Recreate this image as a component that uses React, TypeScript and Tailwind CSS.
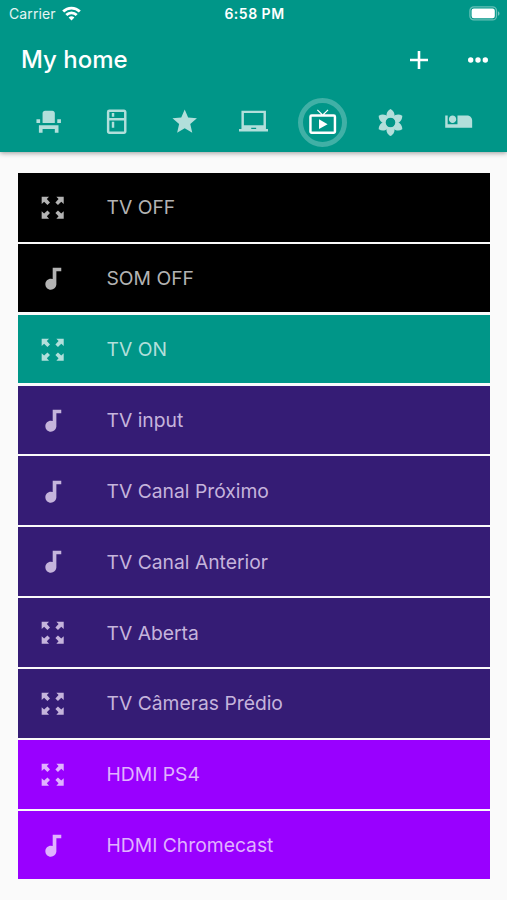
import type { ReactNode } from 'react';
import {
  MdAirlineSeatIndividualSuite,
  MdAudiotrack,
  MdEventSeat,
  MdLaptopChromebook,
  MdLiveTv,
  MdOutlineKitchen,
  MdStar,
} from 'react-icons/md';

const WifiIcon = () => (
  <svg className="ml-[6px] h-[15px] w-[19px]" viewBox="0 0 19 15" fill="none" stroke="currentColor" strokeWidth="2.8">
    <path d="M1.2 5.6a11.8 11.8 0 0 1 16.6 0" />
    <path d="M4.3 9.1a7.4 7.4 0 0 1 10.4 0" />
    <path d="M9.5 14.6l-2.9-3a4.1 4.1 0 0 1 5.8 0z" fill="currentColor" stroke="none" />
  </svg>
);

const BatteryIcon = () => (
  <svg className="h-[15px] w-[31px]" viewBox="0 0 31 15">
    <rect x="0.9" y="0.9" width="26.6" height="13" rx="4" fill="none" stroke="white" strokeOpacity="0.4" strokeWidth="1.3" />
    <rect x="2.6" y="2.6" width="23.2" height="9.6" rx="2.2" fill="white" />
    <path d="M29 5.2v4.6c2-.9 2-3.7 0-4.6z" fill="white" fillOpacity="0.45" />
  </svg>
);

const FlowerIcon = () => (
  <svg className="size-[29px]" viewBox="-14.5 -14.5 29 29" fill="currentColor">
    {[0, 60, 120, 180, 240, 300].map((angle) => (
      <path
        key={angle}
        transform={`rotate(${angle})`}
        d="M-3.6 -5.2C-4.9 -8.4 -3 -12 0 -13.6C3 -12 4.9 -8.4 3.6 -5.2z"
      />
    ))}
    <circle r="6.3" fill="none" stroke="currentColor" strokeWidth="3" />
  </svg>
);

const ExpandIcon = () => (
  <svg className="size-[29.4px]" viewBox="0 0 24 24" fill="currentColor">
    {[0, 90, 180, 270].map((angle) => (
      <path
        key={angle}
        transform={`rotate(${angle} 12 12)`}
        d="M3 3h6L7.2 5l2.6 2.7-2.1 2.1L5 7.2 3 9z"
      />
    ))}
  </svg>
);

const tabs: { name: string; icon: ReactNode }[] = [
  { name: 'living', icon: <MdEventSeat /> },
  { name: 'kitchen', icon: <MdOutlineKitchen /> },
  { name: 'favorites', icon: <MdStar /> },
  { name: 'office', icon: <MdLaptopChromebook /> },
  { name: 'tv', icon: <MdLiveTv /> },
  { name: 'garden', icon: <FlowerIcon /> },
  { name: 'bedroom', icon: <MdAirlineSeatIndividualSuite /> },
];

const rows = [
  { label: 'TV OFF', icon: 'scene', color: 'bg-black text-[#b3b3b3]' },
  { label: 'SOM OFF', icon: 'sound', color: 'bg-black text-[#b3b3b3]' },
  { label: 'TV ON', icon: 'scene', color: 'bg-[#009688] text-[#b2dfdb]' },
  { label: 'TV input', icon: 'sound', color: 'bg-[#351c75] text-[#c5b4dc]' },
  { label: 'TV Canal Próximo', icon: 'sound', color: 'bg-[#351c75] text-[#c5b4dc]' },
  { label: 'TV Canal Anterior', icon: 'sound', color: 'bg-[#351c75] text-[#c5b4dc]' },
  { label: 'TV Aberta', icon: 'scene', color: 'bg-[#351c75] text-[#c5b4dc]' },
  { label: 'TV Câmeras Prédio', icon: 'scene', color: 'bg-[#351c75] text-[#c5b4dc]' },
  { label: 'HDMI PS4', icon: 'scene', color: 'bg-[#9900ff] text-[#e0b2ff]' },
  { label: 'HDMI Chromecast', icon: 'sound', color: 'bg-[#9900ff] text-[#e0b2ff]' },
];

export default function App() {
  return (
    <div className="h-[900px] w-[507px] overflow-hidden bg-[#fafafa] font-['Inter',sans-serif]">
      <header className="h-[152px] bg-[#009688] text-white shadow-[0_1px_5px_rgba(0,0,0,0.4)]">
        <div className="grid h-[27px] grid-cols-3 items-center pr-[7px] pl-[9px] text-[14px]">
          <div className="flex items-center">
            <span className="tracking-[0.1px] text-white/90">Carrier</span>
            <WifiIcon />
          </div>
          <span className="text-center text-[14px] font-semibold tracking-[0.5px]">6:58 PM</span>
          <div className="flex justify-end">
            <BatteryIcon />
          </div>
        </div>

        <div className="flex h-[65px] items-center pl-[21px]">
          <h1 className="flex-1 text-[24px] font-medium">My home</h1>
          <button className="flex w-[59px] justify-center">
            <svg className="size-[18px]" viewBox="0 0 18 18" stroke="currentColor" strokeWidth="2.6">
              <path d="M9 0v18M0 9h18" />
            </svg>
          </button>
          <button className="flex w-[59px] justify-center">
            <svg className="h-[6px] w-[20px]" viewBox="0 0 20 6" fill="currentColor">
              <circle cx="2.7" cy="3" r="2.7" />
              <circle cx="10" cy="3" r="2.7" />
              <circle cx="17.3" cy="3" r="2.7" />
            </svg>
          </button>
        </div>

        <nav className="flex h-[60px] items-center px-[14px]">
          {tabs.map((tab) => (
            <button key={tab.name} className="flex flex-1 justify-center text-[29.4px]">
              {tab.name === 'tv' ? (
                <span className="ml-px flex size-[49px] shrink-0 items-center justify-center rounded-full border-[5px] border-white/25">
                  {tab.icon}
                </span>
              ) : (
                <span className="text-[#b2dfdb]">{tab.icon}</span>
              )}
            </button>
          ))}
        </nav>
      </header>

      <main className="flex flex-col gap-[2.2px] pt-[20.9px] pr-[17px] pl-[18px]">
        {rows.map((row) => (
          <div key={row.label} className={`flex h-[68.7px] items-center pt-px ${row.color}`}>
            <span className="w-[88.5px] pl-[19.8px] text-[29.4px]">
              {row.icon === 'scene' ? <ExpandIcon /> : <MdAudiotrack />}
            </span>
            <span className="text-[19.3px]">{row.label}</span>
          </div>
        ))}
      </main>
    </div>
  );
}
